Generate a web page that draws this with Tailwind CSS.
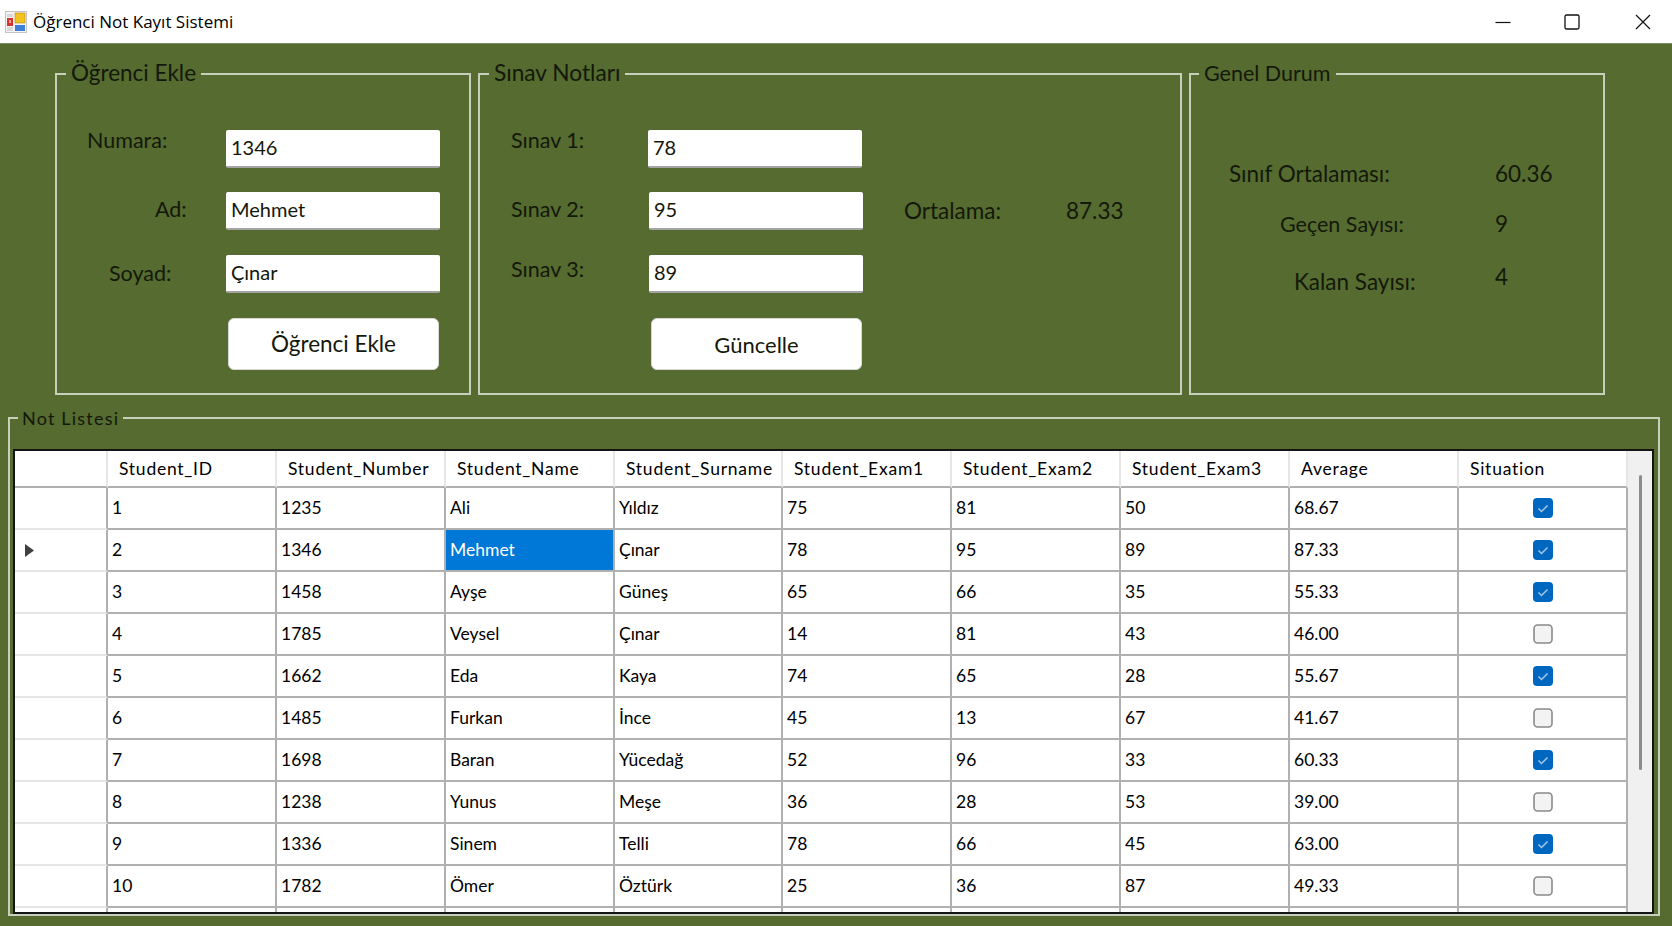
<!DOCTYPE html>
<html lang="tr">
<head>
  <meta charset="UTF-8">
  <title>Öğrenci Not Kayıt Sistemi</title>
  <script src="https://cdn.jsdelivr.net/npm/@tailwindcss/browser@4"></script>
</head>
<body class="w-[1672px] h-[926px] overflow-hidden bg-[#556b2f] font-[Lato,sans-serif] text-[#14180a]">

  <!-- Title bar -->
  <header class="h-[44px] bg-white flex items-center border-b border-[#7b8a5f] text-black">
    <svg class="ml-[5px] w-[22px] h-[22px]" viewBox="0 0 22 22">
      <rect x="0.5" y="0.5" width="21" height="21" fill="#f4f4f4" stroke="#c4c4c4"/>
      <rect x="2" y="3" width="6" height="3" fill="#d8d8d8"/>
      <rect x="2" y="7" width="6" height="8" fill="#d4352c"/>
      <rect x="4" y="9" width="2" height="3" fill="#f0a0a0"/>
      <rect x="2" y="16" width="6" height="4" fill="#d8d8d8"/>
      <rect x="10" y="2" width="10" height="10" fill="#f3c21c" stroke="#b88a10" stroke-width="0.6"/>
      <rect x="10" y="14" width="10" height="6" fill="#3f7fd8"/>
    </svg>
    <span class="ml-[6px] text-[17px] font-['Open_Sans',sans-serif]">Öğrenci Not Kayıt Sistemi</span>
    <div class="ml-auto flex items-center h-full">
      <svg class="w-[16px] h-[16px] mr-[53px]" viewBox="0 0 16 16"><path d="M0.5 8.5H15.5" stroke="#111" stroke-width="1.2"/></svg>
      <svg class="w-[16px] h-[16px] mr-[55px]" viewBox="0 0 16 16"><rect x="1" y="1" width="14" height="14" rx="1.5" fill="none" stroke="#111" stroke-width="1.3"/></svg>
      <svg class="w-[16px] h-[16px] mr-[21px]" viewBox="0 0 16 16"><path d="M1 1L15 15M15 1L1 15" stroke="#111" stroke-width="1.2"/></svg>
    </div>
  </header>

  <main>
    <div class="flex pl-[55px] pt-[29px] gap-[7px]">

      <!-- Öğrenci Ekle -->
      <section class="relative w-[416px] h-[322px] border-2 border-[#c9cfbd] pt-[55px] text-[21.5px]">
        <h2 class="absolute left-[9px] -top-[15px] px-[5px] bg-[#556b2f] text-[22.5px] leading-[26px]">Öğrenci Ekle</h2>
        <div class="flex h-[38px]">
          <label class="w-[169px] pl-[30px] leading-[20px]">Numara:</label>
          <input readonly value="1346" class="w-[214px] h-[38px] px-[5px] pb-[2px] text-[20px] bg-white rounded-[2px] border-b-2 border-[#a4a4a4]">
        </div>
        <div class="flex h-[38px] mt-[24px]">
          <label class="w-[169px] pl-[98px] leading-[34px]">Ad:</label>
          <input readonly value="Mehmet" class="w-[214px] h-[38px] px-[5px] pb-[2px] text-[20px] bg-white rounded-[2px] border-b-2 border-[#a4a4a4]">
        </div>
        <div class="flex h-[38px] mt-[25px]">
          <label class="w-[169px] pl-[52px] leading-[36px]">Soyad:</label>
          <input readonly value="Çınar" class="w-[214px] h-[38px] px-[5px] pb-[2px] text-[20px] bg-white rounded-[2px] border-b-2 border-[#a4a4a4]">
        </div>
        <button class="block ml-[171px] mt-[25px] w-[211px] h-[52px] bg-white rounded-[6px] border border-[#d8d8d8] text-[22.5px]">Öğrenci Ekle</button>
      </section>

      <!-- Sınav Notları -->
      <section class="relative w-[704px] h-[322px] border-2 border-[#c9cfbd] pt-[55px] text-[21.5px]">
        <h2 class="absolute left-[9px] -top-[15px] px-[5px] bg-[#556b2f] text-[22.7px] leading-[26px]">Sınav Notları</h2>
        <div class="flex h-[38px]">
          <label class="w-[168px] pl-[31px] leading-[20px]">Sınav 1:</label>
          <input readonly value="78" class="w-[214px] h-[38px] px-[5px] pb-[2px] text-[20px] bg-white rounded-[2px] border-b-2 border-[#a4a4a4]">
        </div>
        <div class="flex h-[38px] mt-[24px]">
          <label class="w-[169px] pl-[31px] leading-[34px]">Sınav 2:</label>
          <input readonly value="95" class="w-[214px] h-[38px] px-[5px] pb-[2px] text-[20px] bg-white rounded-[2px] border-b-2 border-[#a4a4a4]">
          <span class="ml-[41px] w-[162px] text-[22.5px] leading-[38px]">Ortalama:</span>
          <span class="text-[22.5px] leading-[38px]">87.33</span>
        </div>
        <div class="flex h-[38px] mt-[25px]">
          <label class="w-[169px] pl-[31px] leading-[28px]">Sınav 3:</label>
          <input readonly value="89" class="w-[214px] h-[38px] px-[5px] pb-[2px] text-[20px] bg-white rounded-[2px] border-b-2 border-[#a4a4a4]">
        </div>
        <button class="block ml-[171px] mt-[25px] w-[211px] h-[52px] bg-white rounded-[6px] border border-[#d8d8d8] text-[22px]">Güncelle</button>
      </section>

      <!-- Genel Durum -->
      <section class="relative w-[416px] h-[322px] border-2 border-[#c9cfbd] pt-[85px] text-[22.5px]">
        <h2 class="absolute left-[8px] -top-[15px] px-[5px] bg-[#556b2f] text-[21.5px] leading-[26px]">Genel Durum</h2>
        <div class="flex h-[49px]">
          <span class="w-[304px] pl-[38px] leading-[28px]">Sınıf Ortalaması:</span>
          <span class="leading-[28px]">60.36</span>
        </div>
        <div class="flex h-[49px]">
          <span class="w-[304px] pl-[89px] text-[21.5px] leading-[30px]">Geçen Sayısı:</span>
          <span class="leading-[30px]">9</span>
        </div>
        <div class="flex">
          <span class="w-[304px] pl-[103px] leading-[48px]">Kalan Sayısı:</span>
          <span class="leading-[38px]">4</span>
        </div>
      </section>
    </div>

    <!-- Not Listesi -->
    <section class="relative ml-[8px] mt-[22px] w-[1652px] h-[499px] border-2 border-[#c9cfbd] pt-[30px] pl-[3px]">
      <h2 class="absolute left-[8px] -top-[12px] px-[4px] bg-[#556b2f] text-[18px] leading-[22px] tracking-[1.2px]">Not Listesi</h2>
      <div class="flex w-[1641px] h-[465px] border-2 border-[#141414] bg-white overflow-hidden">
        <div class="w-[1613px] h-[461px] overflow-hidden">
          <table class="w-[1613px] table-fixed border-separate border-spacing-0 text-[17.5px] text-black">
            <colgroup>
              <col class="w-[93px]"><col class="w-[169px]"><col class="w-[169px]"><col class="w-[169px]"><col class="w-[168px]"><col class="w-[169px]"><col class="w-[169px]"><col class="w-[169px]"><col class="w-[169px]"><col class="w-[169px]">
            </colgroup>
            <thead>
              <tr id="gridHead" class="h-[37px]"></tr>
            </thead>
            <tbody id="gridBody"></tbody>
          </table>
        </div>
        <!-- Scrollbar -->
        <div class="flex-1 bg-[#f0f0f0] flex justify-center">
          <div class="w-[3px] h-[295px] mt-[24px] bg-[#8c8c8c] rounded-full"></div>
        </div>
      </div>
    </section>
  </main>

  <script>
    const columns = ['Student_ID','Student_Number','Student_Name','Student_Surname','Student_Exam1','Student_Exam2','Student_Exam3','Average','Situation'];
    const rows = [
      [1,1235,'Ali','Yıldız',75,81,50,'68.67',true],
      [2,1346,'Mehmet','Çınar',78,95,89,'87.33',true],
      [3,1458,'Ayşe','Güneş',65,66,35,'55.33',true],
      [4,1785,'Veysel','Çınar',14,81,43,'46.00',false],
      [5,1662,'Eda','Kaya',74,65,28,'55.67',true],
      [6,1485,'Furkan','İnce',45,13,67,'41.67',false],
      [7,1698,'Baran','Yücedağ',52,96,33,'60.33',true],
      [8,1238,'Yunus','Meşe',36,28,53,'39.00',false],
      [9,1336,'Sinem','Telli',78,66,45,'63.00',true],
      [10,1782,'Ömer','Öztürk',25,36,87,'49.33',false]
    ];
    const checked = `<svg class="block mx-auto w-[20px] h-[20px]" viewBox="0 0 20 20"><rect width="20" height="20" rx="4" fill="#0067c0"/><path d="M5.5 10.5L8.5 13.5L14.5 7.5" fill="none" stroke="#a3c6e9" stroke-width="1.5"/></svg>`;
    const unchecked = `<svg class="block mx-auto w-[20px] h-[20px]" viewBox="0 0 20 20"><rect x="1" y="1" width="18" height="18" rx="3.5" fill="#f3f3f3" stroke="#8a8a8a" stroke-width="1.6"/></svg>`;

    let head = `<th class="border-r-2 border-b-2 border-r-[#e6e6e6] border-b-[#b0b0b0]"></th>`;
    columns.forEach(c => {
      head += `<th class="pl-[11px] pt-[2px] text-left font-normal tracking-[0.75px] whitespace-nowrap overflow-hidden border-r-2 border-b-2 border-r-[#e6e6e6] border-b-[#b0b0b0]">${c}</th>`;
    });
    document.getElementById('gridHead').innerHTML = head;

    const cellCls = 'pl-[4px] border-r-2 border-b-2 border-[#b0b0b0]';
    let body = '';
    rows.forEach((r, i) => {
      const arrow = i === 1 ? `<svg class="ml-[10px] w-[9px] h-[13px]" viewBox="0 0 9 13"><path d="M0 0L9 6.5L0 13Z" fill="#404040"/></svg>` : '';
      body += `<tr class="h-[42px]"><td class="border-r-2 border-b-2 border-r-[#b0b0b0] border-b-[#e6e6e6]">${arrow}</td>`;
      r.slice(0, 8).forEach((v, j) => {
        const selected = i === 1 && j === 2;
        body += `<td class="${cellCls} ${selected ? 'bg-[#0078d7] text-white' : ''}">${v}</td>`;
      });
      body += `<td class="border-r-2 border-b-2 border-[#b0b0b0]">${r[8] ? checked : unchecked}</td></tr>`;
    });
    // next row, only its top edge shows above the grid's bottom border
    body += `<tr class="h-[42px]"><td class="border-r-2 border-r-[#b0b0b0]"></td>` + columns.map(() => `<td class="border-r-2 border-[#b0b0b0]"></td>`).join('') + `</tr>`;
    document.getElementById('gridBody').innerHTML = body;
  </script>
</body>
</html>
